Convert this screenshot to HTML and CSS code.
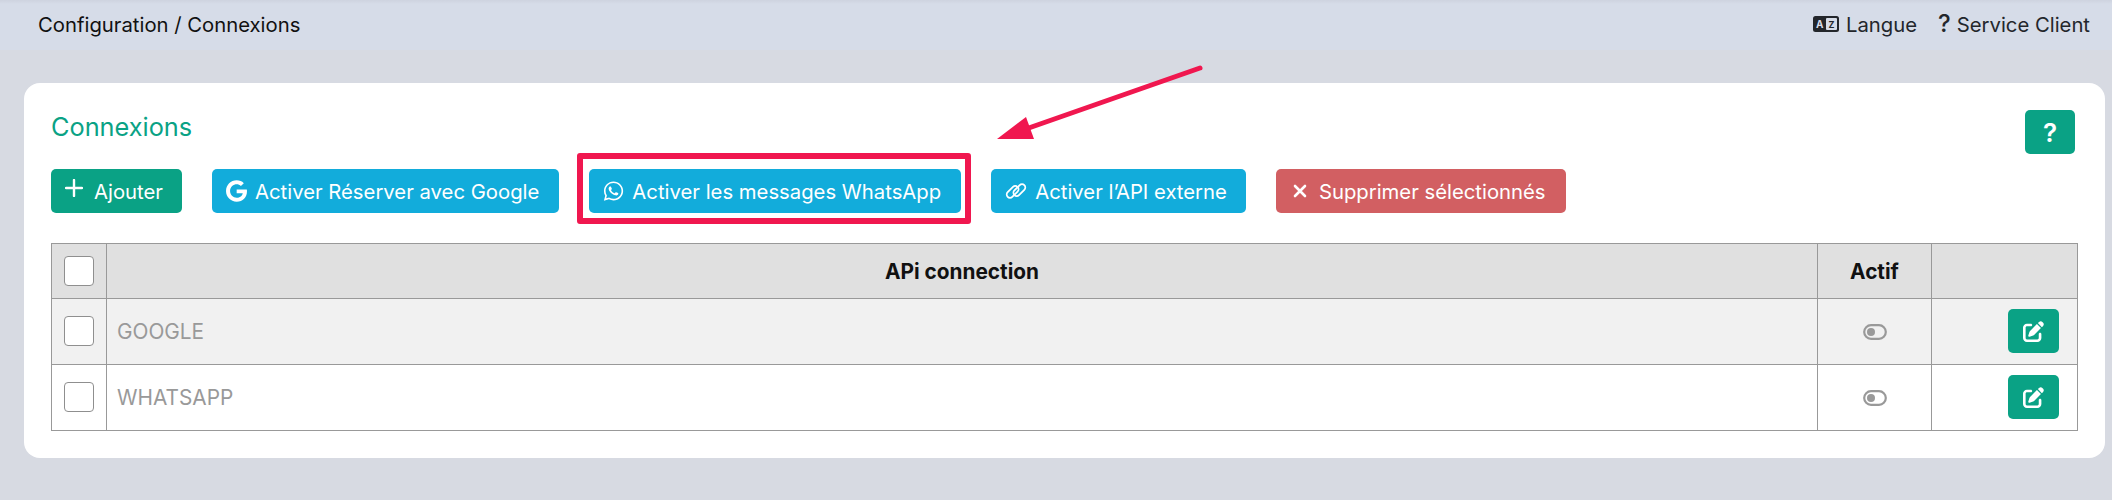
FILE: index.html
```html
<!DOCTYPE html>
<html lang="fr">
<head>
<meta charset="utf-8">
<title>Connexions</title>
<link rel="stylesheet" href="styles.css">
</head>
<body>
<header class="topbar">
  <div class="crumb">Configuration / Connexions</div>
  <nav class="topnav">
    <a class="toplink">
      <svg class="lang-ico" viewBox="0 0 26 16"><rect width="26" height="16" rx="2.5" fill="#23262b"/><rect x="13" y="2" width="11" height="12" rx="1" fill="#d6dce8"/><text x="6.8" y="12" class="lang-a">A</text><text x="18.5" y="12" class="lang-z">Z</text></svg>
      Langue
    </a>
    <a class="toplink q-link"><span class="q-mark">?</span>Service Client</a>
  </nav>
</header>
<main class="page">
  <section class="card">
    <div class="card-head">
      <h1 class="title">Connexions</h1>
      <button class="btn btn-teal btn-help">?</button>
    </div>
    <div class="toolbar">
      <button class="btn btn-teal btn-add"><svg class="ico-plus" viewBox="0 0 18 18"><path d="M9 1v16M1 9h16" stroke="#fff" stroke-width="2.4" stroke-linecap="round"/></svg>Ajouter</button>
      <button class="btn btn-blue"><svg class="ico" viewBox="0 0 488 512"><path fill="#fff" d="M488 261.8C488 403.3 391.1 504 248 504 110.8 504 0 393.2 0 256S110.8 8 248 8c66.8 0 123 24.5 166.3 64.9l-67.5 64.9C258.5 52.6 94.3 116.6 94.3 256c0 86.5 69.1 156.6 153.7 156.6 98.2 0 135-70.4 140.8-106.9H248v-85.3h236.1c2.3 12.7 3.9 24.9 3.9 41.4z"/></svg>Activer Réserver avec Google</button>
      <button class="btn btn-blue"><svg class="ico" viewBox="0 0 448 512"><path fill="#fff" d="M380.9 97.1C339 55.1 283.2 32 223.9 32c-122.4 0-222 99.6-222 222 0 39.1 10.2 77.3 29.6 111L0 480l117.7-30.9c32.4 17.7 68.9 27 106.1 27h.1c122.3 0 224.1-99.6 224.1-222 0-59.3-25.2-115-67.1-157zm-157 341.6c-33.2 0-65.7-8.9-94-25.7l-6.7-4-69.8 18.3L72 359.2l-4.4-7c-18.5-29.4-28.2-63.3-28.2-98.2 0-101.7 82.8-184.5 184.6-184.5 49.3 0 95.6 19.2 130.4 54.1 34.8 34.9 56.2 81.2 56.1 130.5 0 101.8-84.9 184.6-186.6 184.6zm101.2-138.2c-5.5-2.8-32.8-16.2-37.9-18-5.1-1.9-8.8-2.8-12.5 2.8-3.7 5.6-14.3 18-17.6 21.8-3.2 3.7-6.5 4.2-12 1.4-32.6-16.3-54-29.1-75.5-66-5.7-9.8 5.7-9.1 16.3-30.3 1.8-3.7.9-6.9-.5-9.7-1.4-2.8-12.5-30.1-17.1-41.2-4.5-10.8-9.1-9.3-12.5-9.5-3.2-.2-6.9-.2-10.6-.2-3.7 0-9.7 1.4-14.8 6.9-5.1 5.6-19.4 19-19.4 46.3 0 27.3 19.9 53.7 22.6 57.4 2.8 3.7 39.1 59.7 94.8 83.8 35.2 15.2 49 16.5 66.6 13.9 10.7-1.6 32.8-13.4 37.4-26.4 4.6-13 4.6-24.1 3.2-26.4-1.3-2.5-5-3.9-10.5-6.6z"/></svg>Activer les messages WhatsApp</button>
      <button class="btn btn-blue btn-api"><svg class="ico ico-link" viewBox="0 0 22 20"><g fill="none" stroke="#fff" stroke-width="1.800" transform="translate(11 10) rotate(-45)"><rect x="-10" y="-5" width="14" height="6.500" rx="3.250"/><rect x="-4" y="-1.500" width="14" height="6.500" rx="3.250"/></g></svg>Activer l’API externe</button>
      <button class="btn btn-red"><svg class="ico ico-x" viewBox="0 0 14 14"><path d="M2 2l10 10M12 2L2 12" stroke="#fff" stroke-width="2.6" stroke-linecap="round"/></svg>Supprimer sélectionnés</button>
      <div class="highlight"></div>
    </div>
    <table class="grid">
      <colgroup><col class="c-check"><col><col class="c-actif"><col class="c-edit"></colgroup>
      <thead>
        <tr>
          <th class="cell-check"><span class="check"></span></th>
          <th>APi connection</th>
          <th>Actif</th>
          <th></th>
        </tr>
      </thead>
      <tbody>
        <tr class="odd">
          <td class="cell-check"><span class="check"></span></td>
          <td class="name">GOOGLE</td>
          <td class="cell-toggle"><svg class="toggle" viewBox="0 0 24 16"><rect x="1.200" y="1.200" width="21.600" height="13.600" rx="6.800" fill="none" stroke="#999" stroke-width="2.200"/><circle cx="8" cy="8" r="4" fill="#999"/></svg></td>
          <td class="cell-edit"><button class="btn btn-teal btn-edit"><svg class="ico-edit" viewBox="0 0 512 512"><path fill="#fff" d="M471.600 21.700c-21.900-21.900-57.300-21.900-79.200 0L362.300 51.700l97.900 97.900 30.100-30.100c21.900-21.900 21.900-57.300 0-79.200L471.600 21.700zm-299.200 220c-6.100 6.100-10.800 13.600-13.500 21.900l-29.600 88.800c-2.900 8.600-.6 18.100 5.800 24.600s15.900 8.700 24.600 5.800l88.800-29.600c8.200-2.700 15.700-7.400 21.900-13.500L437.700 172.300 339.700 74.300 172.400 241.700zM96 64C43 64 0 107 0 160V416c0 53 43 96 96 96H352c53 0 96-43 96-96V320c0-17.700-14.300-32-32-32s-32 14.300-32 32v96c0 17.700-14.300 32-32 32H96c-17.700 0-32-14.300-32-32V160c0-17.700 14.300-32 32-32h96c17.700 0 32-14.300 32-32s-14.300-32-32-32H96z"/></svg></button></td>
        </tr>
        <tr>
          <td class="cell-check"><span class="check"></span></td>
          <td class="name">WHATSAPP</td>
          <td class="cell-toggle"><svg class="toggle" viewBox="0 0 24 16"><rect x="1.200" y="1.200" width="21.600" height="13.600" rx="6.800" fill="none" stroke="#999" stroke-width="2.200"/><circle cx="8" cy="8" r="4" fill="#999"/></svg></td>
          <td class="cell-edit"><button class="btn btn-teal btn-edit"><svg class="ico-edit" viewBox="0 0 512 512"><path fill="#fff" d="M471.600 21.700c-21.900-21.900-57.300-21.900-79.200 0L362.300 51.700l97.900 97.900 30.100-30.100c21.900-21.900 21.900-57.300 0-79.200L471.600 21.700zm-299.200 220c-6.100 6.100-10.800 13.600-13.500 21.900l-29.600 88.800c-2.900 8.600-.6 18.100 5.800 24.600s15.900 8.700 24.600 5.800l88.800-29.600c8.200-2.700 15.700-7.400 21.900-13.500L437.700 172.300 339.700 74.300 172.400 241.700zM96 64C43 64 0 107 0 160V416c0 53 43 96 96 96H352c53 0 96-43 96-96V320c0-17.700-14.300-32-32-32s-32 14.300-32 32v96c0 17.700-14.300 32-32 32H96c-17.700 0-32-14.300-32-32V160c0-17.700 14.300-32 32-32h96c17.700 0 32-14.300 32-32s-14.300-32-32-32H96z"/></svg></button></td>
        </tr>
      </tbody>
    </table>
  </section>
</main>
<svg class="arrow" viewBox="0 0 220 90" width="220" height="90"><path d="M207 10L30 72" stroke="#f0174f" stroke-width="5" stroke-linecap="round" fill="none"/><path d="M4 81L33 59 41 81z" fill="#f0174f"/></svg>
</body>
</html>
```
FILE: styles.css
```css
* { box-sizing: border-box; }
html, body { margin: 0; padding: 0; }
body {
  width: 2112px;
  height: 500px;
  overflow: hidden;
  position: relative;
  background: #d7dae2;
  font-family: Inter, "Liberation Sans", sans-serif;
  color: #1c1f24;
}
.topbar {
  height: 50px;
  padding: 0 22px 2px 38px;
  display: flex;
  align-items: center;
  justify-content: space-between;
  background: linear-gradient(#ced3df 0, #d6dce8 4px);
  font-size: 20.3px;
}
.crumb { color: #111; }
.topnav { display: flex; align-items: center; gap: 21px; }
.toplink { display: flex; align-items: center; gap: 7px; color: #23262b; }
.q-link { gap: 6px; }
.q-mark { font-size: 24px; font-weight: 500; line-height: 1; }
.lang-ico { width: 26px; height: 16px; }
.lang-a { font: 700 10px Inter, sans-serif; fill: #d6dce8; text-anchor: middle; }
.lang-z { font: 700 9px Inter, sans-serif; fill: #23262b; text-anchor: middle; }
.page { padding: 33px 7px 0 24px; }
.card {
  background: #fff;
  border-radius: 16px;
  padding: 27px 27px 28px;
  height: 375px;
}
.card-head { display: flex; justify-content: space-between; align-items: flex-start; height: 44px; }
.title {
  margin: 0;
  font-size: 25.300px;
  font-weight: 400;
  line-height: 34px;
  color: #0aa285;
}
.btn {
  height: 44px;
  border: 0;
  border-radius: 5px;
  padding: 0 20px 0 14px;
  display: inline-flex;
  align-items: center;
  color: #fff;
  font-family: inherit;
  font-size: 20.3px;
}
.btn-teal { background: #0aa285; }
.btn-blue { background: #12acdb; }
.btn-red { background: #d25f62; padding-left: 17px; }
.btn-api { padding-right: 19px; }
.btn-help { width: 50px; padding: 0; justify-content: center; margin-right: 3px; font-size: 26px; font-weight: 600; }
.btn-add { width: 131px; padding: 0 0 0 14px; }
.toolbar { position: relative; display: flex; gap: 30px; margin-top: 15px; }
.ico { width: 21px; height: 22px; margin-right: 8px; flex: none; }
.ico-link { width: 22px; height: 20px; margin-right: 8px; }
.ico-x { width: 14px; height: 14px; margin-right: 12px; }
.ico-plus { width: 18px; height: 18px; margin-right: 11px; margin-top: -6px; flex: none; }
.highlight {
  position: absolute;
  left: 526px;
  top: -16px;
  width: 394px;
  height: 71px;
  border: 6px solid #f0174f;
  border-radius: 3px;
  pointer-events: none;
}
.grid {
  width: 2027px;
  margin-top: 30px;
  border-collapse: collapse;
  table-layout: fixed;
  font-size: 20.8px;
}
.c-check { width: 55px; }
.c-actif { width: 114px; }
.c-edit { width: 146px; }
.grid th, .grid td { border: 1px solid #999; padding: 0; vertical-align: middle; }
.grid th { height: 55px; background: #e0e0e0; color: #111; font-weight: 700; text-align: center; }
.grid td { height: 66px; }
.grid tr.odd td { background: #f1f1f1; }
.check {
  display: block;
  width: 30px;
  height: 30px;
  margin: -1px auto 0;
  background: #fff;
  border: 1px solid #8f8f8f;
  border-radius: 4px;
}
.name { color: #999; padding-left: 10px !important; font-weight: 400; }
.cell-toggle { text-align: center; }
.toggle { display: block; width: 24px; height: 16px; margin: 0 auto; }
.cell-edit { padding-right: 18px !important; }
.btn-edit { display: flex; width: 51px; padding: 0; justify-content: center; margin: -1px 0 0 auto; }
.ico-edit { width: 21px; height: 21px; }
.arrow { position: absolute; left: 993px; top: 58px; }
```
